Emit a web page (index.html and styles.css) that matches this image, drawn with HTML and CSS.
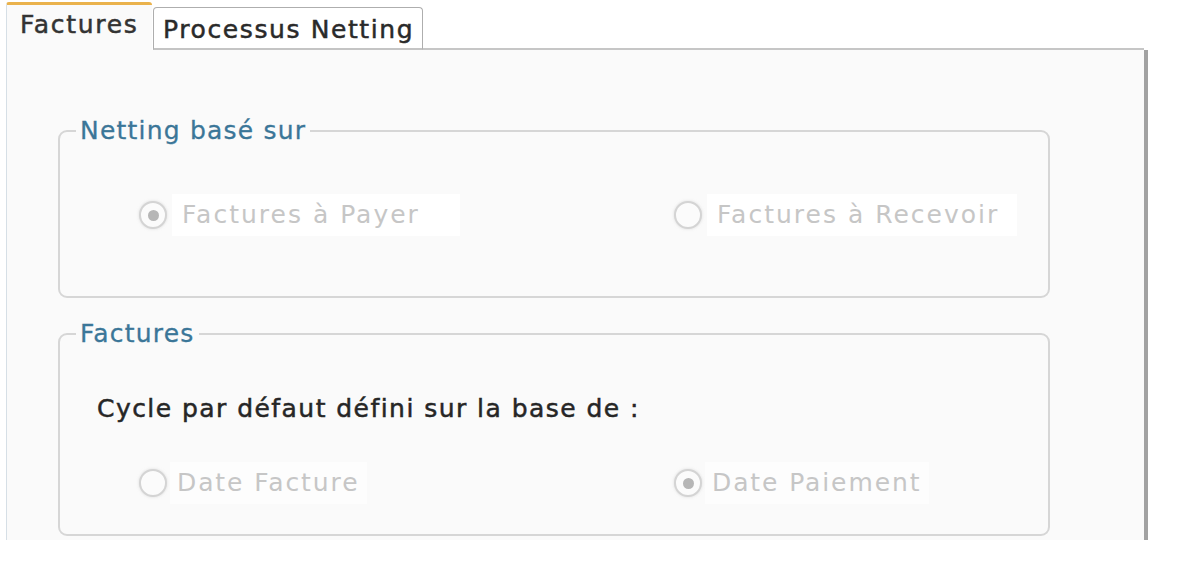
FILE: index.html
```html
<!DOCTYPE html>
<html lang="fr">
<head>
<meta charset="utf-8">
<title>Factures</title>
<link rel="stylesheet" href="styles.css">
</head>
<body>
<div class="window">
  <div class="tabs">
    <div class="tab tab-active">Factures</div>
    <div class="tab tab-idle">Processus Netting</div>
    <div class="tab-fill"></div>
  </div>
  <div class="panel">
    <fieldset class="group group-netting">
      <legend>Netting basé sur</legend>
      <div class="radio-row row-netting">
        <div class="radio radio-wide">
          <span class="dot checked"></span>
          <span class="label label-long">Factures à Payer</span>
        </div>
        <div class="radio radio-wide">
          <span class="dot"></span>
          <span class="label">Factures à Recevoir</span>
        </div>
      </div>
    </fieldset>
    <fieldset class="group group-factures">
      <legend>Factures</legend>
      <div class="caption">Cycle par défaut défini sur la base de :</div>
      <div class="radio-row row-cycle">
        <div class="radio radio-tight">
          <span class="dot"></span>
          <span class="label">Date Facture</span>
        </div>
        <div class="radio radio-tight">
          <span class="dot checked"></span>
          <span class="label">Date Paiement</span>
        </div>
      </div>
    </fieldset>
  </div>
</div>
</body>
</html>
```

FILE: styles.css
```css
html, body {
  margin: 0;
  padding: 0;
  background: #ffffff;
}

body {
  font-family: "DejaVu Sans", "Liberation Sans", sans-serif;
  font-size: 25px;
  letter-spacing: 1.3px;
  color: #2a2a2a;
}

.window {
  width: 1199px;
  height: 540px;
}

.tabs {
  display: flex;
  align-items: flex-end;
  height: 50px;
  margin-left: 6px;
  width: 1142px;
}

.tab {
  box-sizing: border-box;
  line-height: 30px;
  white-space: nowrap;
}

.tab-active {
  width: 146px;
  height: 48px;
  border-top: 3px solid #eab24c;
  border-left: 1px solid #d6dfe6;
  border-radius: 3px 3px 0 0;
  background: #fafafa;
  padding: 5px 0 0 13px;
  color: #333333;
  letter-spacing: 1.7px;
  -webkit-text-stroke: 0.5px #333333;
}

.tab-idle {
  width: 270px;
  height: 43px;
  margin-left: 1px;
  border: 1px solid #aeaeae;
  border-bottom: 2px solid #c4c4c4;
  border-radius: 4px 4px 0 0;
  background: #ffffff;
  padding: 7px 0 0 9px;
  color: #2a2a2a;
  letter-spacing: 1.6px;
  -webkit-text-stroke: 0.5px #2a2a2a;
}

.tab-fill {
  flex: 1;
  height: 48px;
  border-bottom: 2px solid #c6c6c6;
  margin-right: 4px;
}

.panel {
  box-sizing: border-box;
  margin-left: 6px;
  width: 1142px;
  height: 490px;
  background: #fafafa;
  border-left: 1px solid #d6dfe6;
  border-right: 4px solid #a2a2a2;
  padding: 68px 0 0 51px;
}

.group {
  box-sizing: border-box;
  width: 992px;
  margin: 0;
  padding: 0;
  border: 2px solid #d6d6d6;
  border-radius: 9px;
}

.group legend {
  margin-left: 16px;
  padding: 0 4px;
  line-height: 25px;
  color: #3b7698;
  letter-spacing: 1.2px;
  -webkit-text-stroke: 0.3px #3b7698;
}

.group-netting {
  padding-bottom: 60px;
}

.group-factures {
  margin-top: 23px;
  padding-bottom: 30px;
}

.radio-row {
  display: grid;
  grid-template-columns: 535px 1fr;
  padding-left: 79px;
  height: 42px;
  align-items: center;
}

.row-netting {
  margin-top: 51px;
}

.row-cycle {
  margin-top: 38px;
}

.caption {
  margin-top: 48px;
  padding-left: 37px;
  line-height: 30px;
  color: #262626;
  letter-spacing: 1.45px;
  -webkit-text-stroke: 0.5px #262626;
}

.radio {
  display: flex;
  align-items: center;
  height: 42px;
}

.dot {
  box-sizing: border-box;
  flex: none;
  width: 28px;
  height: 28px;
  border: 2px solid #d4d4d4;
  border-radius: 50%;
  background: #fbfbfb;
  box-shadow: 0 0 3px rgba(200, 200, 200, 0.6);
  display: flex;
  align-items: center;
  justify-content: center;
}

.dot.checked::after {
  content: "";
  width: 11px;
  height: 11px;
  border-radius: 50%;
  background: #b6b6b6;
}

.label {
  color: #c6c6c6;
  letter-spacing: 2px;
  background: #ffffff;
  line-height: 42px;
  white-space: nowrap;
}

.radio-wide .label {
  margin-left: 5px;
  padding: 0 18px 0 10px;
}

.radio-wide .label-long {
  padding-right: 40px;
}

.radio-tight .label {
  margin-left: 3px;
  padding: 0 8px 0 7px;
  letter-spacing: 1.9px;
  background: #fdfdfd;
}
```
